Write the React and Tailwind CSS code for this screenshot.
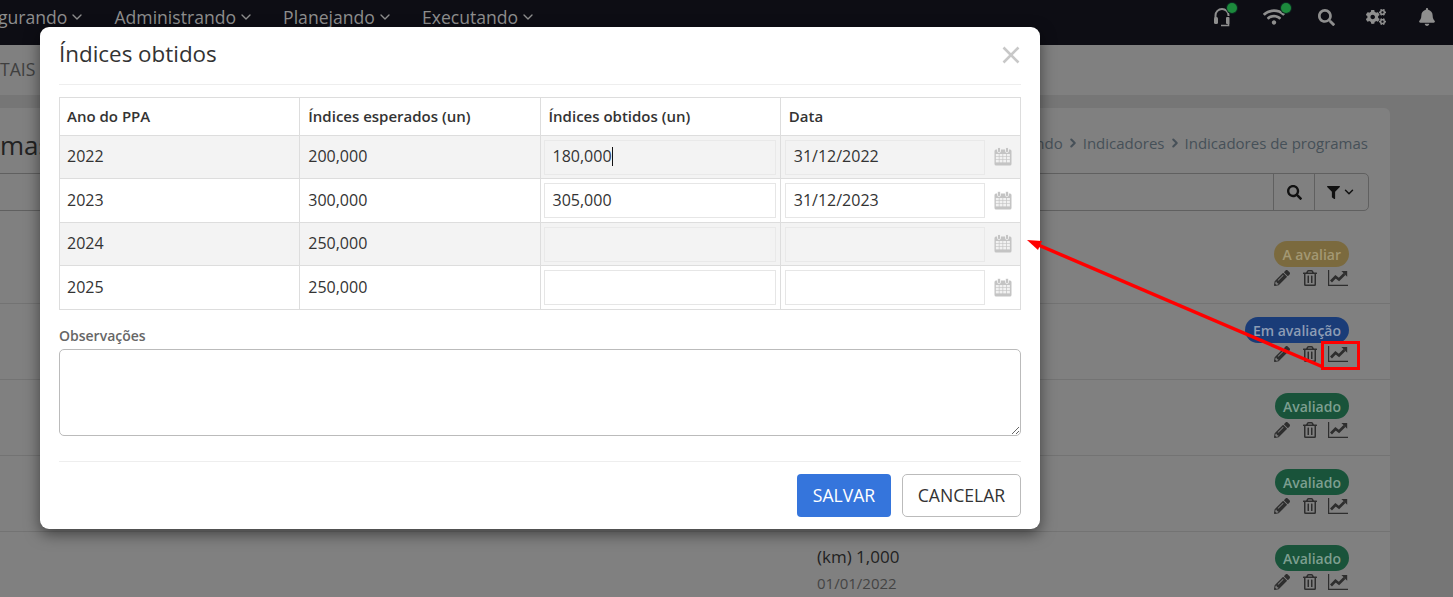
import React from "react";
import { ChevronDown, ChevronRight } from "lucide-react";
import { FaWifi, FaSearch, FaCogs, FaBell, FaFilter, FaPencilAlt, FaRegTrashAlt } from "react-icons/fa";

const Headset = () => (
  <svg width="18" height="20" viewBox="0 0 18 20" className="text-[#8e8e8e]">
    <path d="M2.5 11V8.5a6.5 6.5 0 0 1 13 0V9" fill="none" stroke="currentColor" strokeWidth="2" />
    <rect x="1" y="10" width="4" height="7" rx="1.5" fill="currentColor" />
    <rect x="13" y="10" width="3.5" height="7" rx="1" fill="currentColor" />
    <path d="M15.5 16v2.5H8" fill="none" stroke="currentColor" strokeWidth="1.6" />
  </svg>
);

const Calendar = () => (
  <svg width="18" height="19" viewBox="0 0 18 19" className="block">
    <rect x="0.5" y="2.5" width="17" height="16" rx="1.5" fill="#c4c4c4" />
    <rect x="3.5" y="0.5" width="3" height="5" rx="1.2" fill="#c4c4c4" stroke="#fff" strokeWidth="0.7" />
    <rect x="11.5" y="0.5" width="3" height="5" rx="1.2" fill="#c4c4c4" stroke="#fff" strokeWidth="0.7" />
    {[7, 10, 13].map((y) =>
      [1.8, 5.5, 9.2, 12.9].map((x) => (
        <rect key={`${x}-${y}`} x={x} y={y} width="3" height="2.4" fill="#f1f1f1" />
      ))
    )}
  </svg>
);

const LineChart = () => (
  <svg width="20" height="16" viewBox="0 0 20 16">
    <path d="M0.6 0v15.4H20" fill="none" stroke="currentColor" strokeWidth="1.2" />
    <path d="M3 11.5L7.5 6.8L11 9.5L16.5 4" fill="none" stroke="currentColor" strokeWidth="2.7" />
    <polygon points="13.4,1 19.2,1 19.2,6.8" fill="currentColor" />
  </svg>
);

const navItems = [
  ["gurando", "-ml-[2px]"],
  ["Administrando", ""],
  ["Planejando", ""],
  ["Executando", ""],
];

function Nav() {
  return (
    <div className="flex h-[45px] shrink-0 items-center bg-[#0d0d14] pb-[11px] text-[#8e8e8e]">
      <div className="flex items-center gap-[29px]">
        {navItems.map(([label, cls]) => (
          <div key={label} className={`flex items-center gap-[2px] text-[17.6px] ${cls}`}>
            <span>{label}</span>
            <ChevronDown size={16} strokeWidth={2} />
          </div>
        ))}
      </div>
      <div className="ml-auto flex items-center pr-[17px]">
        <div className="relative mr-[32px]">
          <Headset />
          <span className="absolute -top-[4px] -right-[6px] h-[10px] w-[10px] rounded-full bg-[#1c8a3c] ring-1 ring-[#0d2a22]" />
        </div>
        <div className="relative mr-[33px]">
          <FaWifi size={22} />
          <span className="absolute -top-[3px] -right-[6px] h-[10px] w-[10px] rounded-full bg-[#1c8a3c] ring-1 ring-[#0d2a22]" />
        </div>
        <FaSearch size={17} className="mr-[31px]" />
        <FaCogs size={20} className="mr-[32px]" />
        <FaBell size={18} />
      </div>
    </div>
  );
}

const badgeStyles = {
  "A avaliar": "bg-[#7b6a3e] text-[#a39873]",
  "Em avaliação": "bg-[#1a3c78] text-[#8d9cb5]",
  Avaliado: "bg-[#19533a] text-[#7d9f90]",
};

function ListRow({ badge, last, children }) {
  return (
    <div className={`flex h-[76px] pt-[13px] pr-[41px] ${last ? "" : "border-b border-[#737373]"}`}>
      <div className="-mt-px ml-[817px]">{children}</div>
      <div className="ml-auto flex flex-col items-end">
        <span className={`flex h-[26px] items-center rounded-full px-2 text-[14px] font-semibold ${badgeStyles[badge]}`}>
          {badge}
        </span>
        <div className="mt-[3px] mr-px flex items-center text-[#2e2e2e]">
          <FaPencilAlt size={16} className="mr-[12px]" />
          <FaRegTrashAlt size={16} className="mr-[10px]" />
          <LineChart />
        </div>
      </div>
    </div>
  );
}

function Page() {
  return (
    <div className="flex min-h-0 flex-1 flex-col bg-[#767676]">
      <div className="flex h-[50px] shrink-0 items-center bg-[#808080] pb-[1px] text-[17.6px] text-[#3f3f3f]">TAIS</div>
      <div className="mt-[13px] mr-[63px] flex-1 rounded-tr-[6px] bg-[#808080]">
        <div className="flex h-[65px] items-start pt-[18px] pr-[22px]">
          <h1 className="text-[26px] leading-[38px] font-normal text-[#222]">mas</h1>
          <div className="ml-auto flex items-center gap-[3px] pt-[6px] text-[15px] text-[#465058]">
            <span>ndo</span>
            <ChevronRight size={14} strokeWidth={3.5} />
            <span>Indicadores</span>
            <ChevronRight size={14} strokeWidth={3.5} />
            <span>Indicadores de programas</span>
          </div>
        </div>
        <div className="mr-[21px] -ml-[10px] flex h-[38px] rounded-[5px] border border-[#606060]">
          <div className="flex-1" />
          <div className="flex w-[41px] items-center justify-center border-l border-[#606060] text-[#111]">
            <FaSearch size={15} />
          </div>
          <div className="flex w-[54px] items-center justify-center gap-[2px] border-l border-[#606060] text-[#111]">
            <FaFilter size={13} />
            <ChevronDown size={14} strokeWidth={2.5} />
          </div>
        </div>
        <div className="mt-[17px]">
          <ListRow badge="A avaliar" />
          <ListRow badge="Em avaliação" />
          <ListRow badge="Avaliado" />
          <ListRow badge="Avaliado" />
          <ListRow badge="Avaliado" last>
            <div className="text-[17px] leading-[26px] text-[#222]">(km) 1,000</div>
            <div className="text-[15px] leading-[26px] text-[#444]">01/01/2022</div>
          </ListRow>
        </div>
      </div>
    </div>
  );
}

const rows = [
  { ano: "2022", esp: "200,000", obt: "180,000", data: "31/12/2022", striped: true, caret: true, h: "h-[43px]" },
  { ano: "2023", esp: "300,000", obt: "305,000", data: "31/12/2023", h: "h-[44px]" },
  { ano: "2024", esp: "250,000", obt: "", data: "", striped: true, h: "h-[43px]" },
  { ano: "2025", esp: "250,000", obt: "", data: "", h: "h-[44px]" },
];

function Field({ value, striped, caret, className }) {
  return (
    <div
      className={`flex h-[35px] items-center border px-2 pb-[2px] ${
        striped ? "border-[#e9e9e9] bg-[#f3f3f3]" : "border-[#e6e6e6] bg-white"
      } ${className}`}
    >
      <span>{value}</span>
      {caret && <span className="inline-block h-[19px] w-px bg-[#111]" />}
    </div>
  );
}

function Modal() {
  return (
    <div className="absolute top-[27px] left-[40px] flex h-[502px] w-[1000px] flex-col rounded-[9px] bg-white px-[19px] shadow-[0_5px_15px_rgba(0,0,0,0.5)]">
      <div className="flex h-[58px] shrink-0 items-center justify-between border-b border-[#eeeeee] pb-[3px]">
        <h2 className="text-[22.4px] font-normal text-[#333]">Índices obtidos</h2>
        <svg width="18" height="18" viewBox="0 0 18 18" className="mt-[2px] mr-px">
          <path d="M1.5 1.5l15 15M16.5 1.5l-15 15" stroke="#c8c8c8" strokeWidth="2.6" fill="none" />
        </svg>
      </div>
      <table className="mt-[12px] w-full table-fixed border border-[#dddddd] text-[16px] text-[#333]">
        <thead>
          <tr className="h-[38px]">
            {["Ano do PPA", "Índices esperados (un)", "Índices obtidos (un)", "Data"].map((h) => (
              <th key={h} className="border border-[#dddddd] px-[8px] text-left text-[15px] font-semibold text-[#333] first:px-[7px]">
                {h}
              </th>
            ))}
          </tr>
        </thead>
        <tbody>
          {rows.map((r) => (
            <tr key={r.ano} className={`${r.h} ${r.striped ? "bg-[#f3f3f3]" : "bg-white"}`}>
              <td className="border border-[#dddddd] px-[7px] pb-[2px]">{r.ano}</td>
              <td className="border border-[#dddddd] px-[8px] pb-[2px]">{r.esp}</td>
              <td className="border border-[#dddddd] pr-[4px] pl-[3px]">
                <Field value={r.obt} striped={r.striped} caret={r.caret} />
              </td>
              <td className="border border-[#dddddd] pr-[8px] pl-[4px]">
                <div className="flex items-center">
                  <Field value={r.data} striped={r.striped} className="w-[200px]" />
                  <div className="-mt-px ml-auto">
                    <Calendar />
                  </div>
                </div>
              </td>
            </tr>
          ))}
        </tbody>
      </table>
      <label className="mt-[16px] text-[14px] leading-[20px] font-semibold text-[#666]">Observações</label>
      <textarea className="mt-[3px] h-[87px] w-full rounded-[5px] border border-[#bbbbbb] bg-white" />
      <div className="mt-[25px] flex justify-end gap-[11px] border-t border-[#eeeeee] pt-[12px]">
        <button className="h-[43px] w-[94px] rounded-[4px] bg-[#3575dc] text-[17.6px] font-normal text-white">SALVAR</button>
        <button className="h-[43px] w-[119px] rounded-[5px] border border-[#bbbbbb] bg-white text-[17.6px] text-[#333]">CANCELAR</button>
      </div>
    </div>
  );
}

function Annotation() {
  return (
    <svg width="1453" height="597" className="pointer-events-none absolute top-0 left-0">
      <rect x="1322.5" y="342.5" width="36" height="26" fill="none" stroke="#ff0000" strokeWidth="3" />
      <line x1="1323" y1="367" x2="1036" y2="244" stroke="#ff0000" strokeWidth="3.5" />
      <polygon points="1027,240 1042,241 1038,250" fill="#ff0000" />
    </svg>
  );
}

export default function App() {
  return (
    <div className="relative flex h-[597px] w-full flex-col overflow-hidden font-['Open_Sans',sans-serif]">
      <Nav />
      <Page />
      <Modal />
      <Annotation />
    </div>
  );
}
